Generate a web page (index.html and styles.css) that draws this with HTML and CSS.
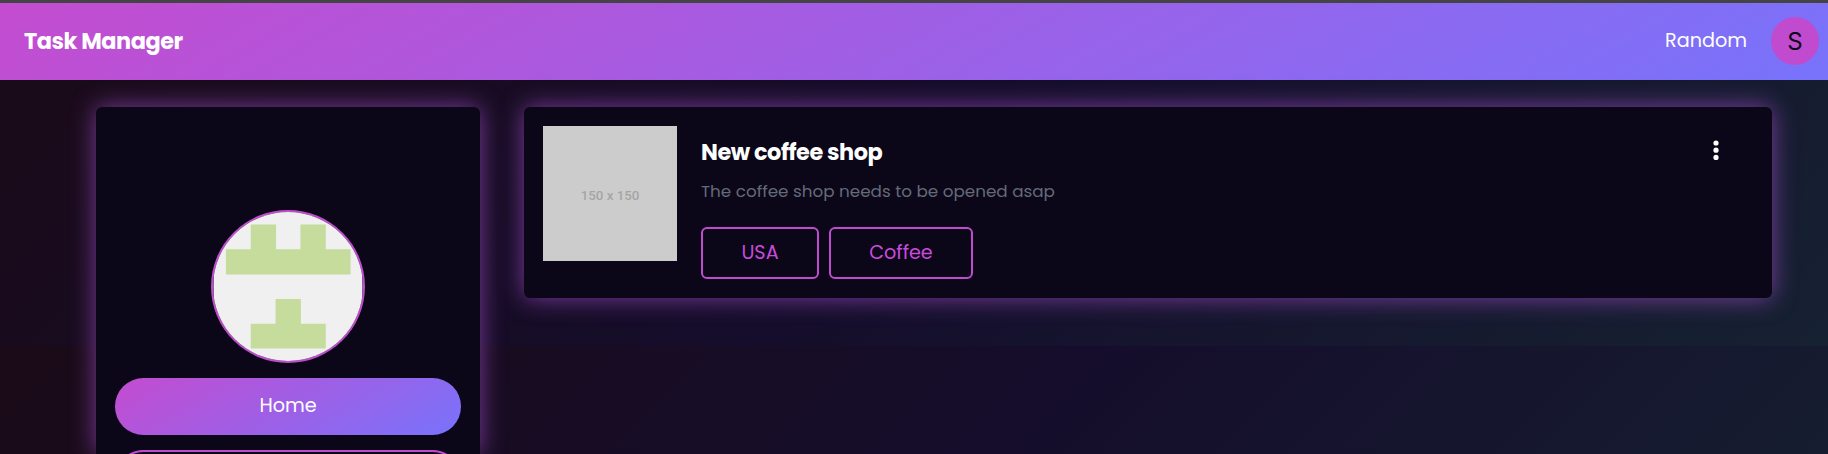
FILE: index.html
```html
<!DOCTYPE html>
<html lang="en">
<head>
<meta charset="utf-8">
<title>Task Manager</title>
<link rel="stylesheet" href="styles.css">
</head>
<body>
<header class="navbar">
  <a class="brand">Task Manager</a>
  <nav class="nav-right">
    <a class="nav-link">Random</a>
    <span class="avatar-badge">S</span>
  </nav>
</header>
<main class="layout">
  <aside class="sidebar">
    <svg class="avatar" viewBox="0 0 150 150" aria-hidden="true">
      <rect width="150" height="150" fill="#f0f0f0"/>
      <path fill="#c5dc9c" d="M37.5 12.5h25.500v25h24.500v-25h25.500v25h25v25.500h-125.500v-25.500h25zM62.500 87.500h25.500v25h25v25h-75.500v-25h25z"/>
    </svg>
    <a class="menu-item menu-item-active">Home</a>
    <a class="menu-item"></a>
  </aside>
  <section class="task">
    <div class="thumb">150 x 150</div>
    <div class="task-body">
      <h2 class="task-title">New coffee shop</h2>
      <p class="task-text">The coffee shop needs to be opened asap</p>
      <div class="tags">
        <span class="tag tag-usa">USA</span>
        <span class="tag tag-coffee">Coffee</span>
      </div>
    </div>
    <svg class="more" viewBox="0 0 6 20" aria-hidden="true"><g fill="#fff"><circle cx="3" cy="3" r="2.6"/><circle cx="3" cy="10.200" r="2.600"/><circle cx="3" cy="17.400" r="2.600"/></g></svg>
  </section>
</main>
</body>
</html>
```
FILE: styles.css
```css
* { box-sizing: border-box; }
html { height: 454px; overflow: hidden; background: #1b0c17; }
body {
  margin: 0;
  height: 454px;
  overflow: hidden;
  border-top: 3px solid #444;
  font-family: Poppins, Lato, sans-serif;
  color: #fff;
  background: linear-gradient(135deg, #1b0b18 0%, #150d2b 50%, #162132 100%) 0 0 / 100% 343px;
}
.navbar {
  height: 77px;
  display: flex;
  align-items: center;
  justify-content: space-between;
  padding: 0 9px 1px 24px;
  background: linear-gradient(150deg, #c44cd0 0%, #7873fb 100%);
}
.brand { font-size: 22.4px; font-weight: 700; letter-spacing: -0.45px; white-space: nowrap; }
.nav-right { display: flex; align-items: center; gap: 24px; }
.nav-link { font-size: 19.2px; padding-bottom: 2px; }
.avatar-badge {
  width: 48px; height: 48px; border-radius: 50%;
  background: #c04bcf; color: #0b0618;
  display: flex; align-items: center; justify-content: center;
  font: 24px Inter, sans-serif;
}
.layout { display: flex; align-items: flex-start; gap: 44px; padding: 27px 56px 0 96px; }
.sidebar, .task {
  background: #0b0618;
  border-radius: 6px;
  box-shadow: 0 0 25px rgba(165, 80, 205, .7);
}
.sidebar {
  width: 384px; height: 347px; flex: none; overflow: hidden;
  border-radius: 6px 6px 0 0;
  display: flex; flex-direction: column; align-items: center;
  gap: 15px; padding: 103px 19px 0;
}
.avatar { width: 154px; height: 153px; flex: none; border: 2px solid #c04bcf; border-radius: 50%; }
.menu-item {
  width: 346px; height: 57px; flex: none; border-radius: 29px;
  border: 2px solid #c04bcf; color: #c04bcf;
  display: flex; align-items: center; justify-content: center;
  font-size: 19.2px;
}
.menu-item-active { border: 0; padding-bottom: 2px; color: #fff; background: linear-gradient(150deg, #c44cd0 0%, #7873fb 100%); }
.task { flex: 1; height: 191px; display: flex; align-items: flex-start; padding: 19px 52px 0 19px; }
.thumb {
  width: 134px; height: 135px; padding-top: 3px; background: #ccc; color: #a5a5a5;
  display: flex; align-items: center; justify-content: center;
  font: 500 13.3px Roboto, sans-serif;
}
.task-body { flex: 1; padding: 8px 0 0 24px; }
.task-title { margin: 0; font-size: 22.4px; line-height: 36px; font-weight: 700; letter-spacing: -.45px; }
.task-text { margin: 9px 0 0; font-size: 16.8px; line-height: 24px; color: #646a7a; }
.tags { display: flex; gap: 10px; margin-top: 24px; }
.tag {
  height: 52px; border: 2px solid #c04bcf; border-radius: 6px; color: #c94bdc;
  display: flex; align-items: center; justify-content: center; font-size: 19.2px; padding-bottom: 1px;
}
.tag-usa { width: 118px; }
.tag-coffee { width: 144px; }
.more { width: 6px; height: 20px; margin: 14px 1px 0 0; }
```
